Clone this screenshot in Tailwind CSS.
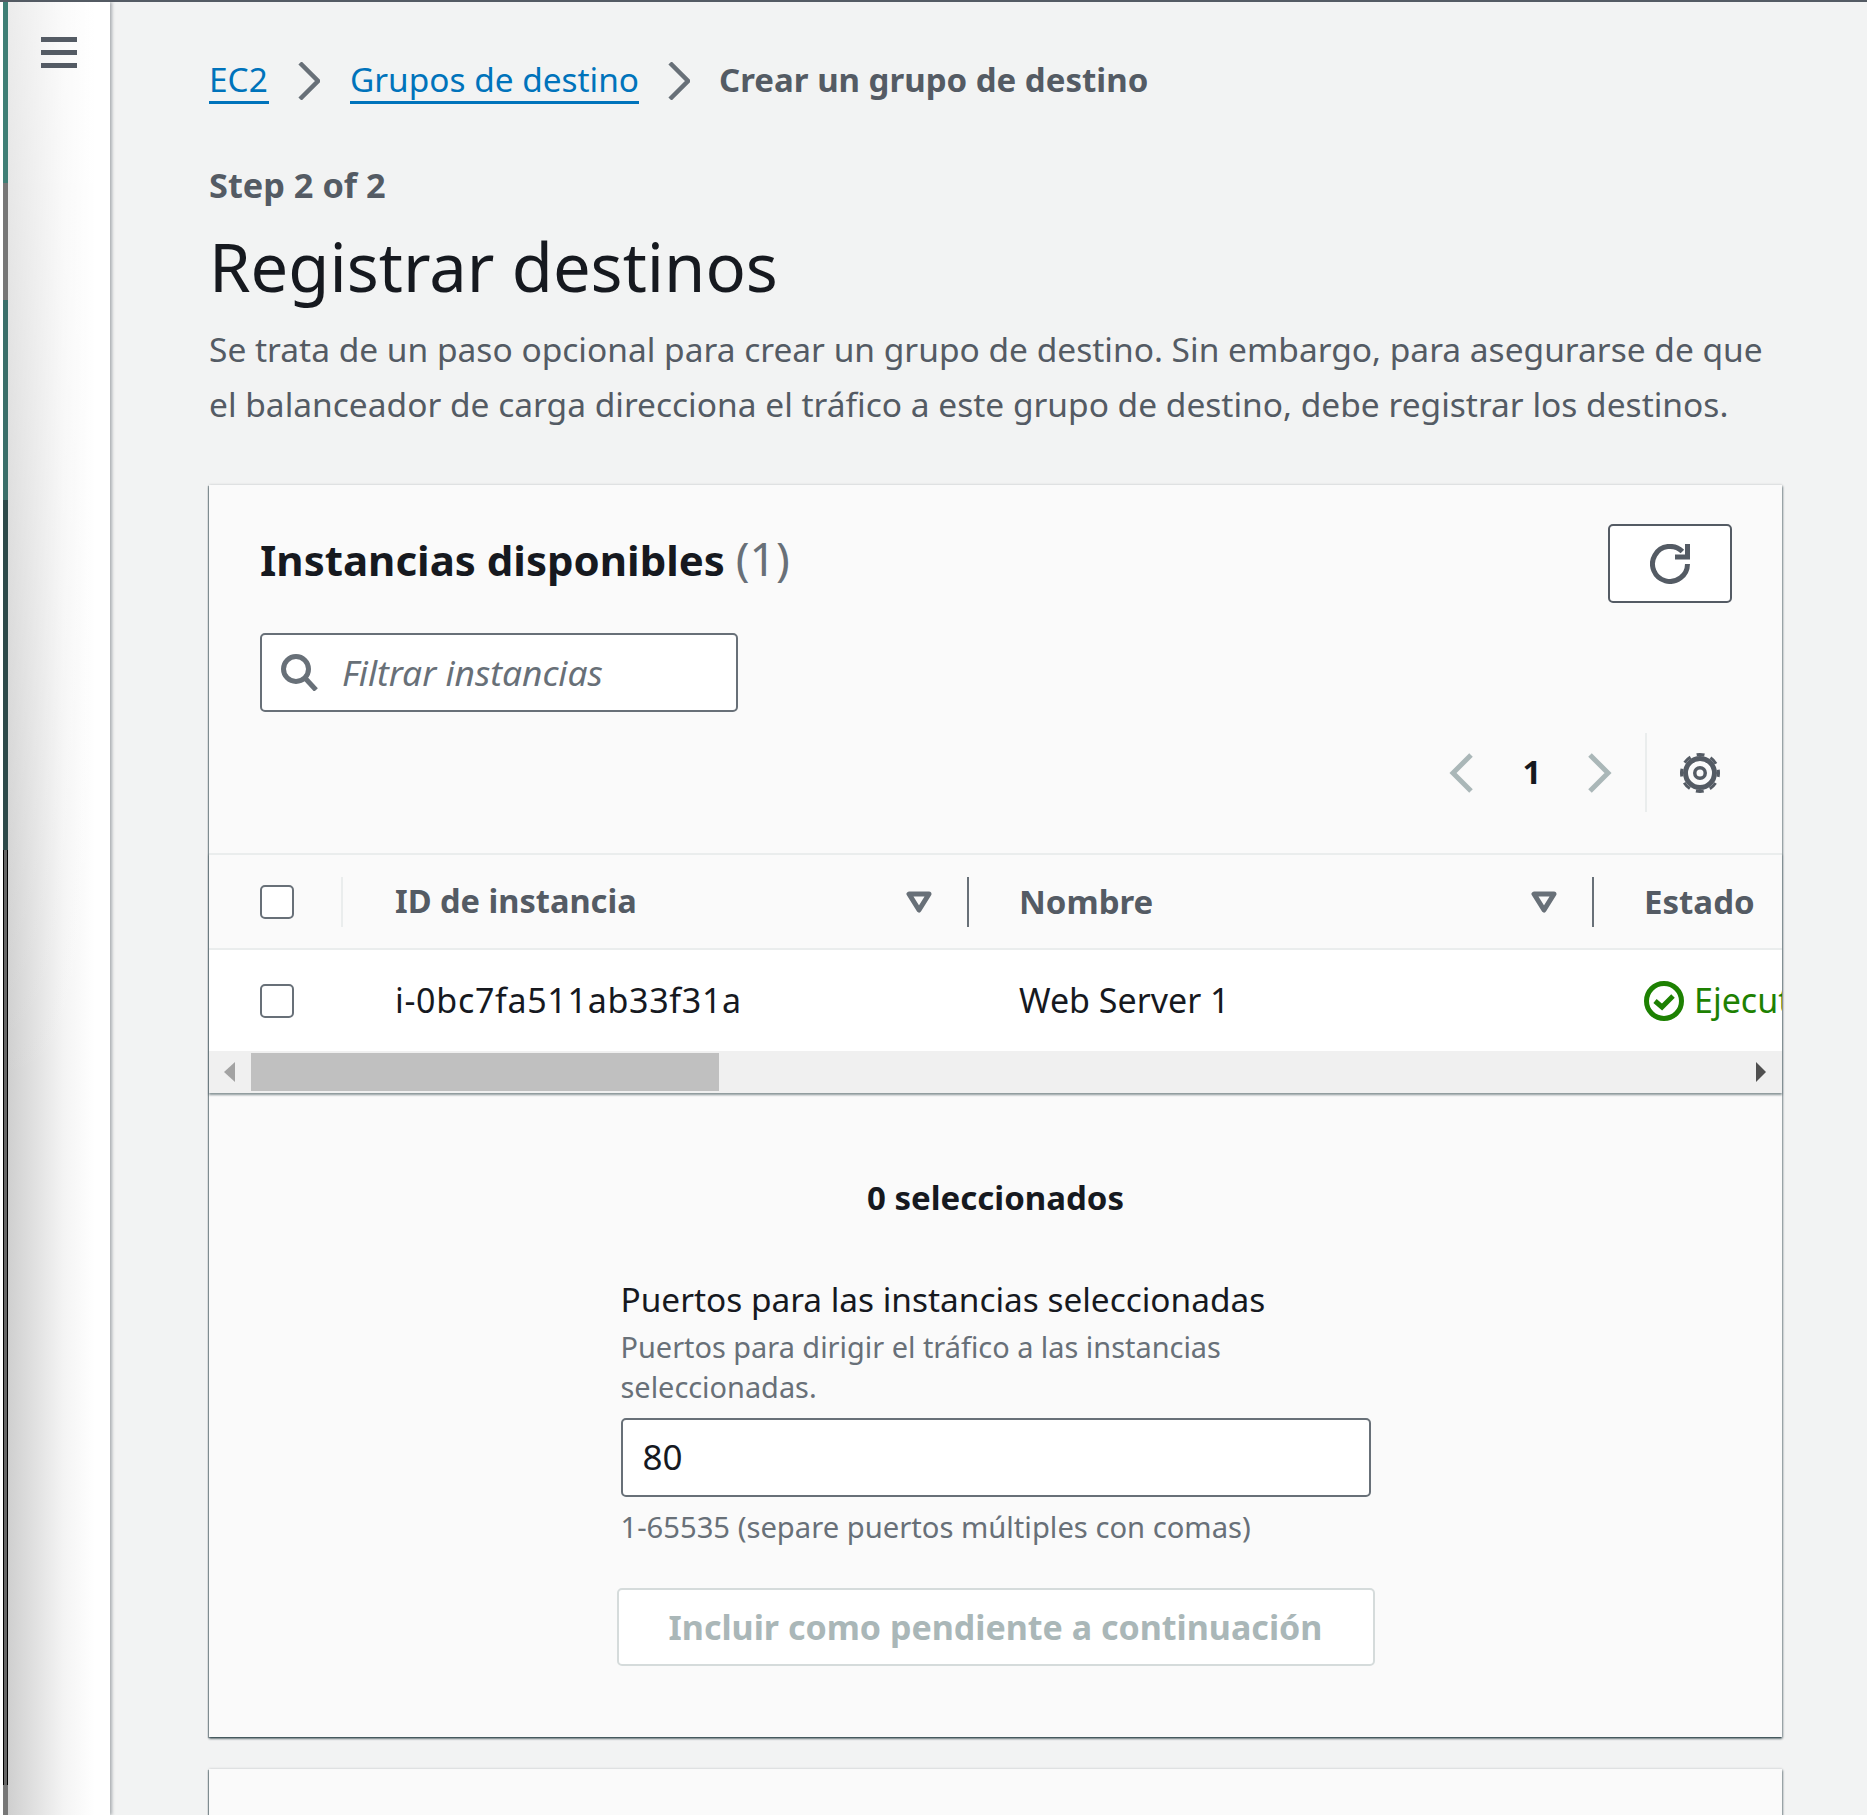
<!DOCTYPE html>
<html lang="es">
<head>
    <meta charset="UTF-8">
    <title>Registrar destinos</title>
    <script src="https://cdn.jsdelivr.net/npm/@tailwindcss/browser@4"></script>
</head>
<body class="h-[1815px] overflow-hidden bg-[#f2f3f3] font-['Noto_Sans',sans-serif] text-[#16191f]">
    <div class="border-t-2 border-[#545b64] flex h-full">
        <!-- left rail -->
        <div class="w-[3px] bg-white"></div>
        <div class="w-[5px] flex flex-col">
            <div class="h-[181px] bg-[#3f7f76]"></div>
            <div class="h-[117px] bg-[#777777]"></div>
            <div class="h-[200px] bg-[#3a6f6a]"></div>
            <div class="h-[350px] bg-[#2d4a4a]"></div>
            <div class="flex-1 bg-[#666666] border-x border-black"></div>
            <div class="h-[30px] bg-[#777777]"></div>
        </div>
        <aside class="w-[102px] bg-[linear-gradient(to_bottom,rgba(255,255,255,0.6),rgba(255,255,255,0)_60%),linear-gradient(to_right,#cfcfcf,#f4f4f4_55%,#ffffff_85%)] shadow-[2px_0_3px_rgba(84,91,100,0.45)] pl-[33px] pt-[35px]">
            <svg width="36" height="31" viewBox="0 0 36 31" fill="#545b64"><rect width="36" height="5"/><rect y="13" width="36" height="5"/><rect y="26" width="36" height="5"/></svg>
        </aside>

        <main class="flex-1 pl-[99px] pr-[85px] min-w-0">
            <!-- breadcrumbs -->
            <nav class="flex items-center h-[44px] mt-[58px] text-[33.400px] leading-[39px]">
                <a class="text-[#0073bb] border-b-[3px] border-[#0073bb] h-[44px] w-[60px]">EC2</a>
                <svg class="ml-[29px] mr-[30px] mb-[2px]" width="22" height="38" viewBox="0 0 22 38" fill="none" stroke="#687078" stroke-width="4.500"><path d="M2 1l18 18L2 37"/></svg>
                <a class="text-[#0073bb] border-b-[3px] border-[#0073bb] h-[44px]">Grupos de destino</a>
                <svg class="mx-[29px] mb-[2px]" width="22" height="38" viewBox="0 0 22 38" fill="none" stroke="#687078" stroke-width="4.500"><path d="M2 1l18 18L2 37"/></svg>
                <span class="pb-[5px] font-bold text-[33px] text-[#545b64]">Crear un grupo de destino</span>
            </nav>

            <p class="mt-[60px] text-[34.300px] leading-[42px] font-bold text-[#545b64]">Step 2 of 2</p>
            <h1 class="mt-[20px] text-[66.900px] leading-[80px] font-normal">Registrar destinos</h1>
            <p class="mt-[16px] text-[33.500px] leading-[55px] text-[#545b64]">Se trata de un paso opcional para crear un grupo de destino. Sin embargo, para asegurarse de que el balanceador de carga direcciona el tráfico a este grupo de destino, debe registrar los destinos.</p>

            <!-- instancias card -->
            <section class="mt-[53px] bg-[#fafafa] shadow-[0_2px_2px_0_rgba(0,28,36,0.45),1px_1px_2px_0_rgba(0,28,36,0.35),-1px_1px_1px_0_rgba(0,28,36,0.35),0_-1px_2px_0_rgba(0,28,36,0.08)] h-[1252px]">
                <div class="h-[368px] pl-[51px] pr-[50px] pt-[39px] flex flex-col">
                    <div class="flex justify-between">
                        <h2 class="pt-[4px] text-[42px] leading-[60px] font-bold">Instancias disponibles <span class="font-normal text-[46px] leading-[60px] text-[#687078]">(1)</span></h2>
                        <button class="w-[124px] h-[79px] bg-white border-2 border-[#545b64] rounded-[5px] flex items-center justify-center">
                            <svg width="40" height="40" viewBox="0 0 40 40" fill="none" stroke="#545b64" stroke-width="5"><path d="M37.500 20a17.500 17.500 0 1 1-5.100-12.400"/><path d="M37.500 0v13H25"/></svg>
                        </button>
                    </div>
                    <label class="mt-[30px] w-[478px] h-[79px] bg-white border-2 border-[#687078] rounded-[5px] flex items-center pl-[19px]">
                        <svg width="37" height="37" viewBox="0 0 37 37" fill="none" stroke="#687078" stroke-width="5"><circle cx="15" cy="15" r="12.500"/><path d="M24 24l11 12"/></svg>
                        <span class="ml-[24px] text-[35.300px] italic text-[#687078]">Filtrar instancias</span>
                    </label>
                    <div class="mt-[21px] flex justify-end items-center h-[79px]">
                        <svg width="24" height="40" viewBox="0 0 24 40" fill="none" stroke="#aab7b8" stroke-width="5"><path d="M22 2L4 20l18 18"/></svg>
                        <span class="w-[115px] pl-[3px] pb-[2px] text-center text-[33px] font-bold">1</span>
                        <svg width="24" height="40" viewBox="0 0 24 40" fill="none" stroke="#aab7b8" stroke-width="5"><path d="M2 2l18 18L2 38"/></svg>
                        <div class="ml-[33px] w-[2px] h-[79px] bg-[#eaeded]"></div>
                        <svg class="ml-[33px] mr-[12px]" width="40" height="40" viewBox="0 0 40 40" fill="none" stroke="#545b64"><circle cx="20" cy="20" r="14.500" stroke-width="5"/><circle cx="20" cy="20" r="18.500" stroke-width="3" stroke-dasharray="8 6.530" stroke-dashoffset="4"/><circle cx="20" cy="20" r="5.250" stroke-width="3.500"/></svg>
                    </div>
                </div>

                <!-- tabla -->
                <div class="relative overflow-hidden shadow-[0_2px_2px_rgba(0,28,36,0.45)]">
                    <div class="grid grid-cols-[134px_626px_625px_1fr] h-[97px] items-center border-t-2 border-b-2 border-[#eaeded] text-[33px] font-bold text-[#545b64]">
                        <div class="pl-[51px] flex items-center h-[50px] border-r-2 border-[#eaeded]"><span class="w-[34px] h-[34px] bg-white border-2 border-[#687078] rounded-[5px]"></span></div>
                        <div class="pl-[52px] pr-[35px] flex items-center justify-between h-[50px] border-r-2 border-[#687078] text-[32.600px]">ID de instancia
                            <svg width="26" height="22" viewBox="0 0 26 22" fill="none" stroke="#687078" stroke-width="5" stroke-linejoin="round"><path d="M3 3h20L13 19z"/></svg></div>
                        <div class="pl-[50px] pr-[35px] flex items-center justify-between h-[50px] border-r-2 border-[#687078]">Nombre
                            <svg width="26" height="22" viewBox="0 0 26 22" fill="none" stroke="#687078" stroke-width="5" stroke-linejoin="round"><path d="M3 3h20L13 19z"/></svg></div>
                        <div class="pl-[50px] overflow-hidden">Estado</div>
                    </div>
                    <div class="grid grid-cols-[134px_626px_625px_1fr] h-[101px] items-center bg-white text-[34px]">
                        <div class="pl-[51px] flex items-center"><span class="w-[34px] h-[34px] bg-white border-2 border-[#687078] rounded-[5px]"></span></div>
                        <div class="pl-[52px] tracking-[0.7px]">i-0bc7fa511ab33f31a</div>
                        <div class="pl-[50px]">Web Server 1</div>
                        <div class="pl-[50px] flex items-center text-[#1d8102] whitespace-nowrap overflow-hidden">
                            <svg class="shrink-0" width="40" height="40" viewBox="0 0 40 40" fill="none" stroke="#1d8102" stroke-width="5"><circle cx="20" cy="20" r="17.500"/><path d="M11 20l7 6 11-11"/></svg>
                            <span class="ml-[10px]">Ejecutándose</span>
                        </div>
                    </div>
                    <!-- scrollbar -->
                    <div class="h-[42px] bg-[#f0f0f0] flex items-center pl-[15px] pr-[16px]">
                        <span class="border-y-[10px] border-y-transparent border-r-[11px] border-r-[#a3a3a3]"></span>
                        <div class="ml-[16px] w-[468px] h-[38px] bg-[#c0c0c0]"></div>
                        <span class="ml-auto border-y-[10px] border-y-transparent border-l-[10px] border-l-[#505050]"></span>
                    </div>
                </div>

                <!-- seleccionados -->
                <div class="flex flex-col items-center pt-[81px]">
                    <p class="text-[33px] leading-[48px] font-bold">0 seleccionados</p>
                    <div class="mt-[53px] w-[758px] pl-[4px]">
                        <p class="text-[33.400px] leading-[48px]">Puertos para las instancias seleccionadas</p>
                        <p class="mt-[4px] text-[28.900px] leading-[40px] text-[#687078] w-[750px]">Puertos para dirigir el tráfico a las instancias seleccionadas.</p>
                        <div class="mt-[11px] w-[750px] h-[79px] bg-white border-2 border-[#687078] rounded-[5px] flex items-center pl-[20px] text-[35px]">80</div>
                        <p class="mt-[10px] text-[29.200px] leading-[40px] text-[#687078]">1-65535 (separe puertos múltiples con comas)</p>
                    </div>
                    <button class="mt-[41px] w-[758px] h-[78px] bg-white border-2 border-[#d5dbdb] rounded-[5px] text-[34px] font-bold text-[#aab7b8]">Incluir como pendiente a continuación</button>
                </div>
            </section>

            <section class="mt-[32px] h-[100px] bg-[#fafafa] shadow-[0_2px_2px_0_rgba(0,28,36,0.45),1px_1px_2px_0_rgba(0,28,36,0.35),-1px_1px_1px_0_rgba(0,28,36,0.35),0_-1px_2px_0_rgba(0,28,36,0.08)]"></section>
        </main>
    </div>
</body>
</html>
